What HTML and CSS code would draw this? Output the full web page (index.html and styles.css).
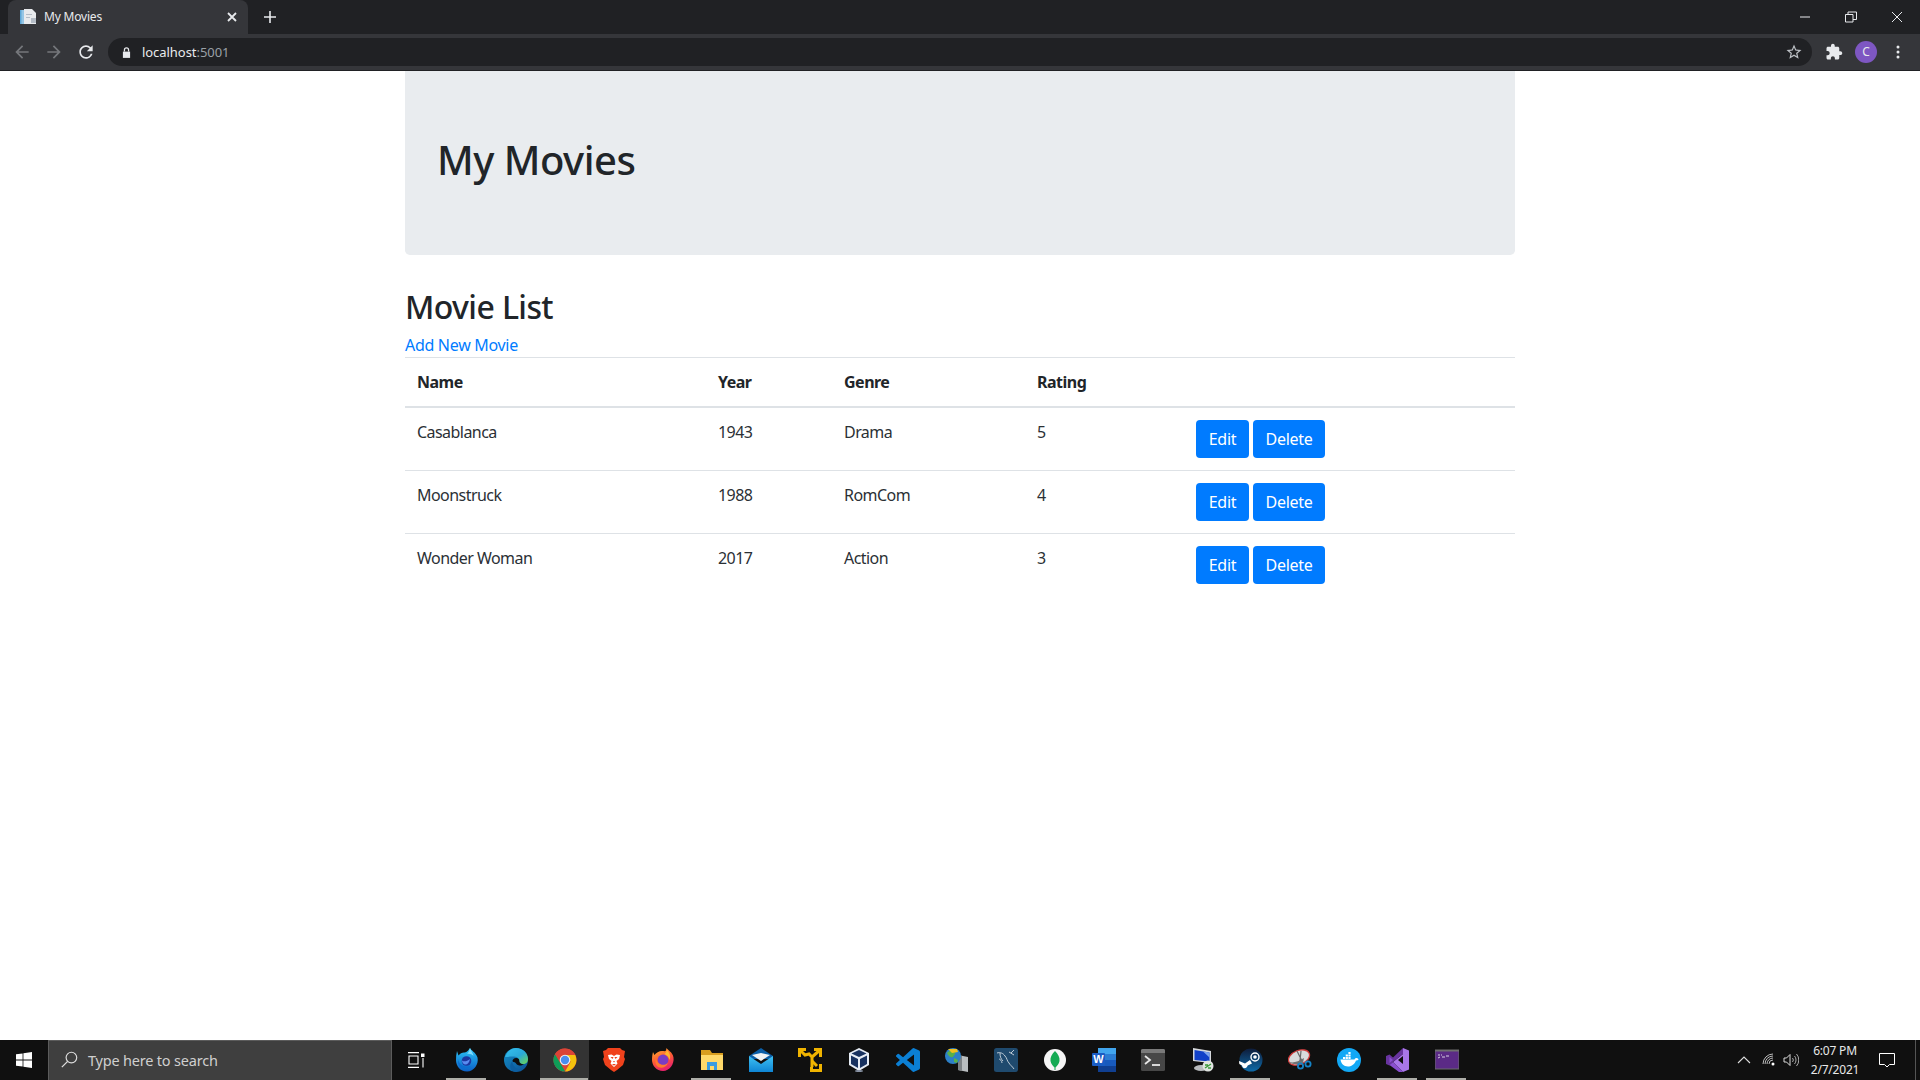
FILE: index.html
```html
<!DOCTYPE html>
<html lang="en">
<head>
<meta charset="utf-8">
<title>My Movies</title>
<link rel="stylesheet" href="styles.css">
</head>
<body>
<div class="screen">
  <header class="browser">
    <div class="tabstrip">
      <div class="tab">
        <svg class="favicon" viewBox="0 0 16 16" width="16" height="16"><path fill="#5fa8d8" d="M0 1h4v14H0z"/><path fill="#fff" d="M1.5 1H4v14H1.500z" opacity=".35"/><path fill="#e8eaed" d="M4 0h8l4 4v11H4z"/><path fill="#b4bcc6" d="M11 9h5v5h-5zM6 5h6v1H6zM6 8h4v1H6z"/></svg>
        <span class="tab-title">My Movies</span>
        <svg class="tab-close" viewBox="0 0 10 10" width="10" height="10"><path d="M1 1l8 8M9 1l-8 8" stroke="#e8eaed" stroke-width="1.800"/></svg>
      </div>
      <svg class="new-tab" viewBox="0 0 12 12" width="12" height="12"><path d="M6 0v12M0 6h12" stroke="#e8eaed" stroke-width="1.600"/></svg>
      <div class="win-controls">
        <svg viewBox="0 0 12 12" width="12" height="12"><path d="M1 6h10" stroke="#e8eaed"/></svg>
        <svg viewBox="0 0 12 12" width="12" height="12"><path d="M.5 3.500h7.500v7.500H.5zM3 3.500V1h8.500v7.500H8" fill="none" stroke="#e8eaed"/></svg>
        <svg viewBox="0 0 12 12" width="12" height="12"><path d="M1 1l10 10M11 1L1 11" stroke="#e8eaed"/></svg>
      </div>
    </div>
    <div class="toolbar">
      <svg class="nav-icon" viewBox="0 0 24 24" width="20" height="20"><path fill="#75777b" d="M20 11H7.830l5.590-5.590L12 4l-8 8 8 8 1.410-1.410L7.830 13H20v-2z"/></svg>
      <svg class="nav-icon" viewBox="0 0 24 24" width="20" height="20"><path fill="#75777b" d="M4 11h12.170l-5.590-5.590L12 4l8 8-8 8-1.410-1.410L16.170 13H4v-2z"/></svg>
      <svg class="nav-icon" viewBox="0 0 24 24" width="20" height="20"><path fill="#e8eaed" d="M17.650 6.350A7.958 7.958 0 0 0 12 4c-4.420 0-7.990 3.580-7.990 8s3.570 8 7.990 8c3.730 0 6.840-2.550 7.730-6h-2.080A5.990 5.990 0 0 1 12 18c-3.310 0-6-2.690-6-6s2.690-6 6-6c1.660 0 3.140.69 4.220 1.780L13 11h7V4l-2.350 2.350z"/></svg>
      <div class="omnibox">
        <svg class="lock" viewBox="0 0 10 12" width="9" height="11"><path fill="#e8eaed" d="M1 5h8v7H1z"/><path fill="none" stroke="#e8eaed" stroke-width="1.400" d="M2.700 5V3.200a2.300 2.300 0 0 1 4.600 0V5"/></svg>
        <span class="url">localhost<span class="url-port">:5001</span></span>
        <svg class="star" viewBox="0 0 24 24" width="18" height="18"><path fill="#bdc1c6" d="M22 9.240l-7.190-.62L12 2 9.190 8.630 2 9.240l5.460 4.730L5.820 21 12 17.270 18.180 21l-1.630-7.030L22 9.240zM12 15.400l-3.760 2.270 1-4.280-3.320-2.880 4.380-.38L12 6.100l1.710 4.040 4.380.38-3.320 2.880 1 4.280L12 15.400z"/></svg>
      </div>
      <svg class="ext" viewBox="0 0 24 24" width="18" height="18"><path fill="#e8eaed" d="M20.500 11H19V7c0-1.100-.9-2-2-2h-4V3.500C13 2.120 11.880 1 10.500 1S8 2.120 8 3.500V5H4c-1.100 0-1.990.9-1.990 2v3.800H3.500c1.490 0 2.700 1.210 2.700 2.700s-1.210 2.700-2.700 2.700H2V20c0 1.100.9 2 2 2h3.800v-1.500c0-1.490 1.210-2.700 2.700-2.700 1.490 0 2.700 1.210 2.700 2.700V22H17c1.100 0 2-.9 2-2v-4h1.500c1.380 0 2.500-1.120 2.500-2.500S21.880 11 20.500 11z"/></svg>
      <span class="avatar">C</span>
      <svg class="kebab" viewBox="0 0 4 14" width="4" height="14"><circle cx="2" cy="2" r="1.500" fill="#e8eaed"/><circle cx="2" cy="7" r="1.500" fill="#e8eaed"/><circle cx="2" cy="12" r="1.500" fill="#e8eaed"/></svg>
    </div>
  </header>

  <main class="page">
    <div class="container">
      <section class="jumbotron"><h1 class="title">My Movies</h1></section>
      <h2 class="subtitle">Movie List</h2>
      <a class="add-link" href="#">Add New Movie</a>
      <table class="movies">
        <thead>
          <tr><th class="c-name">Name</th><th class="c-year">Year</th><th class="c-genre">Genre</th><th class="c-rating">Rating</th><th></th></tr>
        </thead>
        <tbody>
          <tr><td>Casablanca</td><td>1943</td><td>Drama</td><td>5</td><td><div class="actions"><button class="btn btn-edit">Edit</button><button class="btn btn-del">Delete</button></div></td></tr>
          <tr><td>Moonstruck</td><td>1988</td><td>RomCom</td><td>4</td><td><div class="actions"><button class="btn btn-edit">Edit</button><button class="btn btn-del">Delete</button></div></td></tr>
          <tr><td>Wonder Woman</td><td>2017</td><td>Action</td><td>3</td><td><div class="actions"><button class="btn btn-edit">Edit</button><button class="btn btn-del">Delete</button></div></td></tr>
        </tbody>
      </table>
    </div>
  </main>

  <footer class="taskbar">
    <div class="start">
      <svg viewBox="0 0 16 16" width="16" height="16"><path fill="#fff" d="M0 2.300l6.600-.9v6.200H0zM7.400 1.300L16 0v7.600H7.400zM0 8.400h6.600v6.200L0 13.700zM7.400 8.400H16V16l-8.600-1.300z"/></svg>
    </div>
    <div class="search">
      <svg viewBox="0 0 16 16" width="17" height="17"><circle cx="9.800" cy="6.200" r="5" fill="none" stroke="#ddd" stroke-width="1.100"/><path d="M6.200 9.800L.8 15.200" stroke="#ddd" stroke-width="1.200"/></svg>
      <span class="search-text">Type here to search</span>
    </div>
    <div class="taskview">
      <svg viewBox="0 0 18 16" width="18" height="16"><path fill="none" stroke="#fff" stroke-width="1.100" d="M1 .6h11M1 15.400h11M2 4h9v8H2zM16 6v9.500"/><path fill="#fff" d="M14 1.500h3.500V5H14z"/></svg>
    </div>
    <div class="tb-icons">
      <div class="tb-btn open"><svg viewBox="0 0 24 24" width="24" height="24"><defs><linearGradient id="fd" x1="0" y1="0" x2="0" y2="1"><stop offset="0" stop-color="#2cc6f7"/><stop offset="1" stop-color="#0b5fc6"/></linearGradient></defs><path fill="url(#fd)" d="M2 3l1.500 4.500C5 5.500 7 4.500 9 4.500c2.500 0 3.500-1 6-4.500 .5 2 6 4.500 7.500 9.500C24 16 19 23.500 12 23.500S1 18 1 12c0-3 .2-6 1-9z"/><path fill="#7fdcff" d="M15 0c.5 2.500 3 4.500 3.500 8-1.500-1.500-4-2.500-6.500-2 1.500-1.500 2.500-3.500 3-6z"/><circle cx="11.500" cy="13" r="4.800" fill="#1c37a0"/><path fill="#5a8cf0" d="M7 12.500c2 1.500 5 1 8-1.500-.5 3.500-2.500 5.500-4.500 5.500S7 14.500 7 12.500z"/><path fill="#0b6dd0" d="M3 11c1 6 7 9.500 13 7 -3 3-9 3.500-11.500 .5C3 17 2.500 14 3 11z"/></svg></div>
      <div class="tb-btn"><svg viewBox="0 0 24 24" width="24" height="24"><defs><linearGradient id="eg" x1="0" y1="0" x2="1" y2="1"><stop offset="0" stop-color="#35c1f1"/><stop offset=".55" stop-color="#2aa8d8"/><stop offset="1" stop-color="#6fd84f"/></linearGradient><linearGradient id="eb" x1="0" y1="0" x2="1" y2="1"><stop offset="0" stop-color="#1590c8"/><stop offset="1" stop-color="#0b4f94"/></linearGradient></defs><circle cx="12" cy="12" r="12" fill="url(#eb)"/><path fill="url(#eg)" d="M1 9C3 3.500 7 0 12 0c7 0 12 5 12 11 0 3-2 5-5 5-2.500 0-4-1-4-2.500 0-2-1-5-5-5-4 0-7 .5-9 .5z"/><path fill="#0e0e0e" d="M8.500 13c0-2 2-3.500 4.500-3 1.500.3 2.500 1.500 2.300 3 0 2 2 3.500 4.700 3.200-1.800 1-4 1.800-5.500 1-2-.6-2.500-2-3-2.500-1 -.7-3 -.5-3 -1.700z"/><path fill="#0c5ea0" d="M8.500 13c-.5 4 3 8 8 8.500-2 1.500-4 2.500-6 2.200C6 23 4.500 17 8.500 13z"/></svg></div>
      <div class="tb-btn active"><svg viewBox="0 0 24 24" width="24" height="24"><circle cx="12" cy="12" r="11.500" fill="#db4437"/><path fill="#0f9d58" d="M12 23.500A11.500 11.500 0 0 1 2 6.200L7.800 16l4.400 7.500z"/><path fill="#f4c20d" d="M22 6.500A11.500 11.500 0 0 1 12 23.500l5.700-9.800L12 7h9.500z"/><path fill="#db4437" d="M2 6.200A11.500 11.500 0 0 1 22 6.500H12A5.500 5.500 0 0 0 7 9.500z"/><circle cx="12" cy="12" r="5.300" fill="#f1f1f1"/><circle cx="12" cy="12" r="4.200" fill="#4a8ef0"/></svg></div>
      <div class="tb-btn"><svg viewBox="0 0 24 24" width="24" height="24"><path fill="#f0421c" d="M6 0h12l2 2 3 1-1 6 1 2-2 6-6 5-3 2-3-2-6-5-2-6 1-2-1-6 3-1z"/><path fill="#fff" d="M6 7l3.500-.5L12 8l2.500-1.500L18 7l-1 4-2.500 2 1 2.500L12 19l-3.500-3.500 1-2.500L7 11z"/><path fill="#f0421c" d="M8.500 9h3l-1 2zM12.500 9h3l-2 2zM11 13h2l-1 1.500zM10 16h4l-2 1.800z"/></svg></div>
      <div class="tb-btn"><svg viewBox="0 0 24 24" width="24" height="24"><defs><linearGradient id="ff" x1="0" y1="0" x2=".4" y2="1"><stop offset="0" stop-color="#ffb52e"/><stop offset=".55" stop-color="#ff5d33"/><stop offset="1" stop-color="#e8246a"/></linearGradient></defs><path fill="url(#ff)" d="M2 4l1.500 3C5 5 8 3 11 3c2 0 3 .5 4-.5L15.500 0c1 2 6 4 7 9.500C23.500 16 18.500 23 12 23S1 17.500 1 12c0-3 .3-5 1-8z"/><circle cx="12" cy="12" r="5.400" fill="#7a3cc4"/><path fill="#ffb52e" d="M16 2c3 3 4 7 2.500 10-.5-3-3-5-5-6 1-1 2-2 2.500-4z"/><path fill="#ff7a2e" d="M5 10c1 6 7 9 12 5-2 5-8 6-11 3-2-2-2-6-1-8z"/></svg></div>
      <div class="tb-btn open"><svg viewBox="0 0 24 24" width="24" height="24"><path fill="#d99e1f" d="M1 2h9l2 3h11v17H1z"/><path fill="#ffd96a" d="M1 7h22v15H1z"/><path fill="#3a9ce0" d="M7 14h10v8h-3v-4h-4v4H7z"/></svg></div>
      <div class="tb-btn"><svg viewBox="0 0 24 24" width="24" height="24"><defs><linearGradient id="ml" x1="0" y1="0" x2="0" y2="1"><stop offset="0" stop-color="#3ec1f3"/><stop offset="1" stop-color="#0f85d4"/></linearGradient></defs><path fill="#0a5ea8" d="M0 8l12-8 12 8v3H0z"/><path fill="#eef2f5" d="M3 7l9 6 9-6-9-2z"/><path fill="url(#ml)" d="M0 8l12 8 12-8v16H0z"/></svg></div>
      <div class="tb-btn"><svg viewBox="0 0 24 24" width="24" height="24"><g fill="none" stroke="#f0b400" stroke-width="3"><path d="M1.500 9V1.500H8M16 1.500h6.500V9M22.500 16v6.500h-9V19"/><path d="M2 2l5 5 4-1 3 3M22 2l-8 7v10"/><path d="M14 13l5 5"/></g></svg></div>
      <div class="tb-btn"><svg viewBox="0 0 24 24" width="24" height="24"><path fill="#e6ecf4" d="M12 0l10 5v12l-10 6-10-6V5z"/><path fill="#17315f" d="M12 2l7.500 3.500L12 9 4.500 5.500zM4 7.500l7 3.500v9l-7-4zM20 7.500L13 11v9l7-4z"/><ellipse cx="12" cy="23" rx="4" ry="1" fill="#8a94a6"/></svg></div>
      <div class="tb-btn"><svg viewBox="0 0 24 24" width="24" height="24"><path fill="#0b7fd4" d="M23.150 2.587L18.210.21a1.494 1.494 0 0 0-1.705.29l-9.460 8.630-4.120-3.128a.999.999 0 0 0-1.276.057L.327 7.261A1 1 0 0 0 .326 8.740L3.899 12 .326 15.260a1 1 0 0 0 .001 1.479L1.650 17.940a.999.999 0 0 0 1.276.057l4.120-3.128 9.460 8.630a1.492 1.492 0 0 0 1.704.29l4.942-2.377A1.500 1.500 0 0 0 24 20.060V3.939a1.500 1.500 0 0 0-.85-1.352zm-5.146 14.861L10.826 12l7.178-5.448v10.896z"/></svg></div>
      <div class="tb-btn"><svg viewBox="0 0 24 24" width="24" height="24"><path fill="#b9bdbf" d="M13 7l10 2v15l-10-2z"/><path fill="#7d8285" d="M13 7l4 1v15l-4-1z"/><circle cx="8" cy="8" r="8" fill="#2c80c8"/><path fill="#58b04a" d="M2 5c3-3 6-3 8-1 1 2-1 3-2 5-2 1-4 0-6-4zM9 10l4 2-1 3-3-1z"/><path fill="#f0c020" d="M3 1h9l1 3-6 1z"/></svg></div>
      <div class="tb-btn"><svg viewBox="0 0 24 24" width="24" height="24"><rect width="24" height="24" rx="2.500" fill="#1f4a6e"/><path fill="none" stroke="#cfd9e2" stroke-width=".9" d="M3 5c3-1 6 0 8 3 2 2 2 5 4 7 1 2 3 3 5 6M6 5c0 4 1 6 3 8M5 11c1 0 3 2 3 4M20 2l-3 3M15 4l5 3"/></svg></div>
      <div class="tb-btn"><svg viewBox="0 0 24 24" width="24" height="24"><circle cx="12" cy="12" r="11" fill="#f5f5f5"/><path fill="#13aa52" d="M12 3c3 3 5 6 4.500 10-.4 3-2.500 5-4 6.500V22h-1v-2.500c-1.500-1.500-3.600-3.500-4-6.500C7 9 9 6 12 3z"/></svg></div>
      <div class="tb-btn"><svg viewBox="0 0 24 24" width="24" height="24"><path fill="#41a5ee" d="M6 0h18v6H6z"/><path fill="#2b7cd3" d="M6 6h18v6H6z"/><path fill="#185abd" d="M6 12h18v6H6z"/><path fill="#103f91" d="M6 18h18v6H6z"/><rect x="0" y="5" width="13" height="13" rx="1" fill="#1a5cc4"/><text class="word-w" x="6.500" y="15.300" text-anchor="middle">W</text></svg></div>
      <div class="tb-btn"><svg viewBox="0 0 24 24" width="24" height="24"><rect y="1" width="24" height="22" rx="1.500" fill="#474747"/><path fill="#7a7a7a" d="M0 2.500A1.500 1.500 0 0 1 1.500 1h21A1.500 1.500 0 0 1 24 2.500V5H0z"/><path fill="none" stroke="#e8e8e8" stroke-width="1.800" d="M4 8l5 4-5 4"/><path stroke="#e8e8e8" stroke-width="1.800" d="M11 17h8"/></svg></div>
      <div class="tb-btn"><svg viewBox="0 0 24 24" width="24" height="24"><path fill="#d5d8dc" d="M3 0l18 3v12L3 13z"/><path fill="#1140c8" d="M4.500 2L19.500 4.500v9L4.500 12z"/><path fill="#7da3ea" d="M13 3.500l6.500 1v5z"/><ellipse cx="11" cy="20" rx="7" ry="3" fill="#b9bcbf"/><circle cx="18" cy="18" r="5.500" fill="#dfe3e0"/><path stroke="#3a9a3a" stroke-width="1.400" d="M15 20l6-4M15 17h3M18 20h3"/></svg></div>
      <div class="tb-btn open"><svg viewBox="0 0 24 24" width="24" height="24"><defs><linearGradient id="st" x1="0" y1="0" x2="0" y2="1"><stop offset="0" stop-color="#0e1c3a"/><stop offset="1" stop-color="#0f6ba8"/></linearGradient></defs><circle cx="12" cy="12" r="11.500" fill="url(#st)"/><circle cx="16" cy="9" r="4" fill="none" stroke="#fff" stroke-width="1.400"/><circle cx="16" cy="9" r="1.800" fill="#fff"/><path fill="#fff" d="M0 13l6 2.400 5-3.400 2 3.500-4.300 2c-.6 2-2.200 3-4 2.500C3.500 19.500 3 18 3 17.500L.3 16z"/></svg></div>
      <div class="tb-btn"><svg viewBox="0 0 24 24" width="24" height="24"><ellipse cx="11" cy="9.500" rx="11" ry="7" transform="rotate(-22 11 9.500)" fill="#d8dadb" stroke="#d03a3a" stroke-width="1.300"/><path fill="#6f7274" d="M0 13c3 3 10 1 16-3l-1 5c-6 2-11 2-15-2z"/><path stroke="#666" stroke-width="1.200" d="M9 3l5 10M13 3l-1 10"/><circle cx="12.500" cy="18" r="2.600" fill="none" stroke="#1583c6" stroke-width="1.800"/><circle cx="20" cy="16" r="2.600" fill="none" stroke="#1583c6" stroke-width="1.800"/></svg></div>
      <div class="tb-btn"><svg viewBox="0 0 24 24" width="24" height="24"><circle cx="12" cy="12" r="12" fill="#12a8f5"/><path fill="#fff" d="M3.500 11.500h14c.5-1 1-1.500 2-1.500 1.300 0 1.800.8 2 1.500-.5.700-1.500 1-2.500 1-1.500 4-5 6-8 6-4.500 0-7-3-7.500-7z"/><path fill="#fff" d="M6 9h2.200v2H6zM8.700 9h2.200v2H8.700zM11.400 9h2.200v2h-2.200zM8.700 6.500h2.200v2H8.700zM11.400 6.500h2.200v2h-2.200zM11.400 4h2.200v2h-2.200z"/></svg></div>
      <div class="tb-btn open"><svg viewBox="0 0 24 24" width="24" height="24"><path fill="#a876e8" d="M17 0l6 2.500v19L17 24 7 14l10-8z"/><path fill="#68349f" d="M17 0v6l-10 8 -3.500 3.500L0 16V8l3.500-1.500L7 9.500z"/><path fill="#8a4fd0" d="M3.500 9l3.500 3-3.500 3zM7 14l10 10-4 0L3.500 17z"/><path fill="#0e0e0e" d="M17 8v8l-5-4z"/></svg></div>
      <div class="tb-btn open"><svg viewBox="0 0 24 24" width="24" height="24"><rect y="2" width="24" height="19" fill="#5b2a86" stroke="#6a6a6a"/><path fill="#6f6f6f" d="M0 2h24v1.500H0z"/><path stroke="#d6cde0" stroke-width="1" d="M3 7h2M6 7h1M3 10l2-1M7 9h3M11 8h3"/></svg></div>
    </div>
    <div class="tray">
      <svg class="t-chev" viewBox="0 0 14 8" width="14" height="8"><path d="M1 7l6-6 6 6" fill="none" stroke="#ddd" stroke-width="1.100"/></svg>
      <svg class="t-wifi" viewBox="0 0 14 14" width="14" height="14"><g fill="none" stroke="#bbb" stroke-width="1"><path d="M1 11a10 10 0 0 1 10-10"/><path d="M3 11a8 8 0 0 1 8-8"/><path d="M5 11a6 6 0 0 1 6-6"/><path d="M7 11a4 4 0 0 1 4-4"/></g><circle cx="11" cy="11" r="1.500" fill="#fff"/></svg>
      <svg class="t-vol" viewBox="0 0 16 14" width="16" height="14"><path d="M1 5h2.500L7 1.500v11L3.500 9H1z" fill="none" stroke="#ddd"/><path d="M9.500 5a3 3 0 0 1 0 4M11.500 3a6 6 0 0 1 0 8M13.500 1a9 9 0 0 1 0 12" fill="none" stroke="#aaa"/></svg>
      <div class="clock"><span>6:07 PM</span><span>2/7/2021</span></div>
      <svg class="t-note" viewBox="0 0 16 16" width="16" height="16"><path d="M.5 1.500h15v11h-5L8 15l-2.500-2.500h-5z" fill="none" stroke="#fff"/></svg>
      <span class="show-desktop"></span>
    </div>
  </footer>
</div>
</body>
</html>
```
FILE: styles.css
```css
* { box-sizing: border-box; }
html, body { margin: 0; height: 100%; }
body { font-family: "Noto Sans", "Open Sans", sans-serif; color: #212529; background: #fff; overflow: hidden; }
.screen { display: flex; flex-direction: column; height: 100vh; }

/* browser chrome */
.browser { flex: none; height: 71px; background: #35363a; border-bottom: 1px solid #202124; }
.tabstrip { display: flex; align-items: center; height: 34px; background: #202124; padding-left: 8px; }
.tab { display: flex; align-items: center; width: 240px; height: 34px; background: #35363a; border-radius: 8px 8px 0 0; padding: 0 11px 0 12px; }
.favicon { flex: none; }
.tab-title { flex: 1; margin-left: 8px; padding-bottom: 1px; font-size: 12px; color: #e8eaed; letter-spacing: -.2px; }
.tab-close { flex: none; }
.new-tab { flex: none; margin-left: 16px; }
.win-controls { margin-left: auto; display: flex; align-items: center; gap: 34px; padding-right: 17px; }
.toolbar { display: flex; align-items: center; height: 36px; padding-left: 12px; }
.nav-icon { flex: none; margin-right: 12px; }
.omnibox { flex: none; display: flex; align-items: center; width: 1704px; height: 28px; background: #202124; border-radius: 14px; padding: 0 9px 0 14px; }
.lock { flex: none; }
.url { margin-left: 11px; font-size: 13px; color: #e8eaed; letter-spacing: -.05px; }
.url-port { color: #9aa0a6; }
.star { margin-left: auto; }
.ext { flex: none; margin-left: 13px; }
.avatar { flex: none; width: 22px; height: 22px; margin-left: 12px; border-radius: 50%; background: #7e57c2; color: #e8eaed; font-size: 12px; line-height: 22px; text-align: center; }
.kebab { flex: none; margin-left: 19px; }

/* page content */
.page { flex: 1; min-height: 0; }
.container { width: 1110px; margin: 0 auto; }
.jumbotron { padding: 64px 32px; background: #e9ecef; border-radius: 0 0 4.800px 4.800px; margin-bottom: 32px; }
.title { margin: 0 0 7px; padding-top: 1px; font-size: 40px; line-height: 48px; font-weight: 500; letter-spacing: -.5px; }
.subtitle { margin: 0 0 7px; padding-top: 1px; font-size: 32px; line-height: 38.400px; font-weight: 500; letter-spacing: -.6px; }
.add-link { display: block; font-size: 16px; line-height: 24px; color: #007bff; text-decoration: none; letter-spacing: -.3px; }
.movies { width: 1110px; border-collapse: collapse; table-layout: fixed; font-size: 16px; line-height: 24px; }
.movies th { text-align: left; font-weight: 700; padding: 12px; border-top: 1px solid #dee2e6; border-bottom: 2px solid #dee2e6; letter-spacing: -.5px; }
.movies td { padding: 12px; vertical-align: top; border-bottom: 1px solid #dee2e6; letter-spacing: -.55px; color: #2b3035; }
.movies tr:last-child td { border-bottom: 0; }
.c-name { width: 301px; }
.c-year { width: 126px; }
.c-genre { width: 193px; }
.c-rating { width: 159px; }
.actions { display: flex; gap: 4px; }
.btn { display: block; height: 38px; border: 0; border-radius: 4px; background: #007bff; color: #fff; font: inherit; padding: 0; letter-spacing: -.3px; }
.btn-edit { width: 53px; }
.btn-del { width: 72px; }

/* taskbar */
.taskbar { flex: none; display: flex; align-items: stretch; height: 40px; background: #101010; }
.start { flex: none; width: 48px; display: flex; align-items: center; justify-content: center; }
.search { flex: none; width: 344px; display: flex; align-items: center; padding: 0 0 2px 12px; background: #3f3f3f; border: 1px solid #5c5c5c; border-bottom: 0; }
.search-text { margin-left: 10px; font-size: 14.500px; color: #cfcfcf; letter-spacing: -.2px; }
.taskview { flex: none; width: 47px; display: flex; align-items: center; justify-content: center; }
.tb-icons { display: flex; margin-left: 3px; }
.tb-btn { position: relative; width: 49px; display: flex; align-items: center; justify-content: center; }
.tb-btn.open::after { content: ""; position: absolute; left: 4px; right: 5px; bottom: 0; height: 2px; background: #aeaea8; }
.tb-btn.active { background: #333; }
.tb-btn.active::after { content: ""; position: absolute; left: 0; right: 1px; bottom: 0; height: 2px; background: #aeaea8; }
.word-w { font-family: "Liberation Sans", sans-serif; font-size: 11px; font-weight: 700; fill: #fff; }
.tray { margin-left: auto; display: flex; align-items: center; }
.t-chev { flex: none; }
.t-wifi { flex: none; margin-left: 11px; }
.t-vol { flex: none; margin-left: 7px; }
.clock { display: flex; flex-direction: column; align-items: center; width: 62px; margin-left: 5px; font-size: 12px; line-height: 19px; color: #e8e8e8; letter-spacing: -.2px; }
.t-note { flex: none; margin-left: 13px; margin-right: 20px; }
.show-desktop { align-self: stretch; width: 1px; background: #555; margin-right: 4px; }
```
